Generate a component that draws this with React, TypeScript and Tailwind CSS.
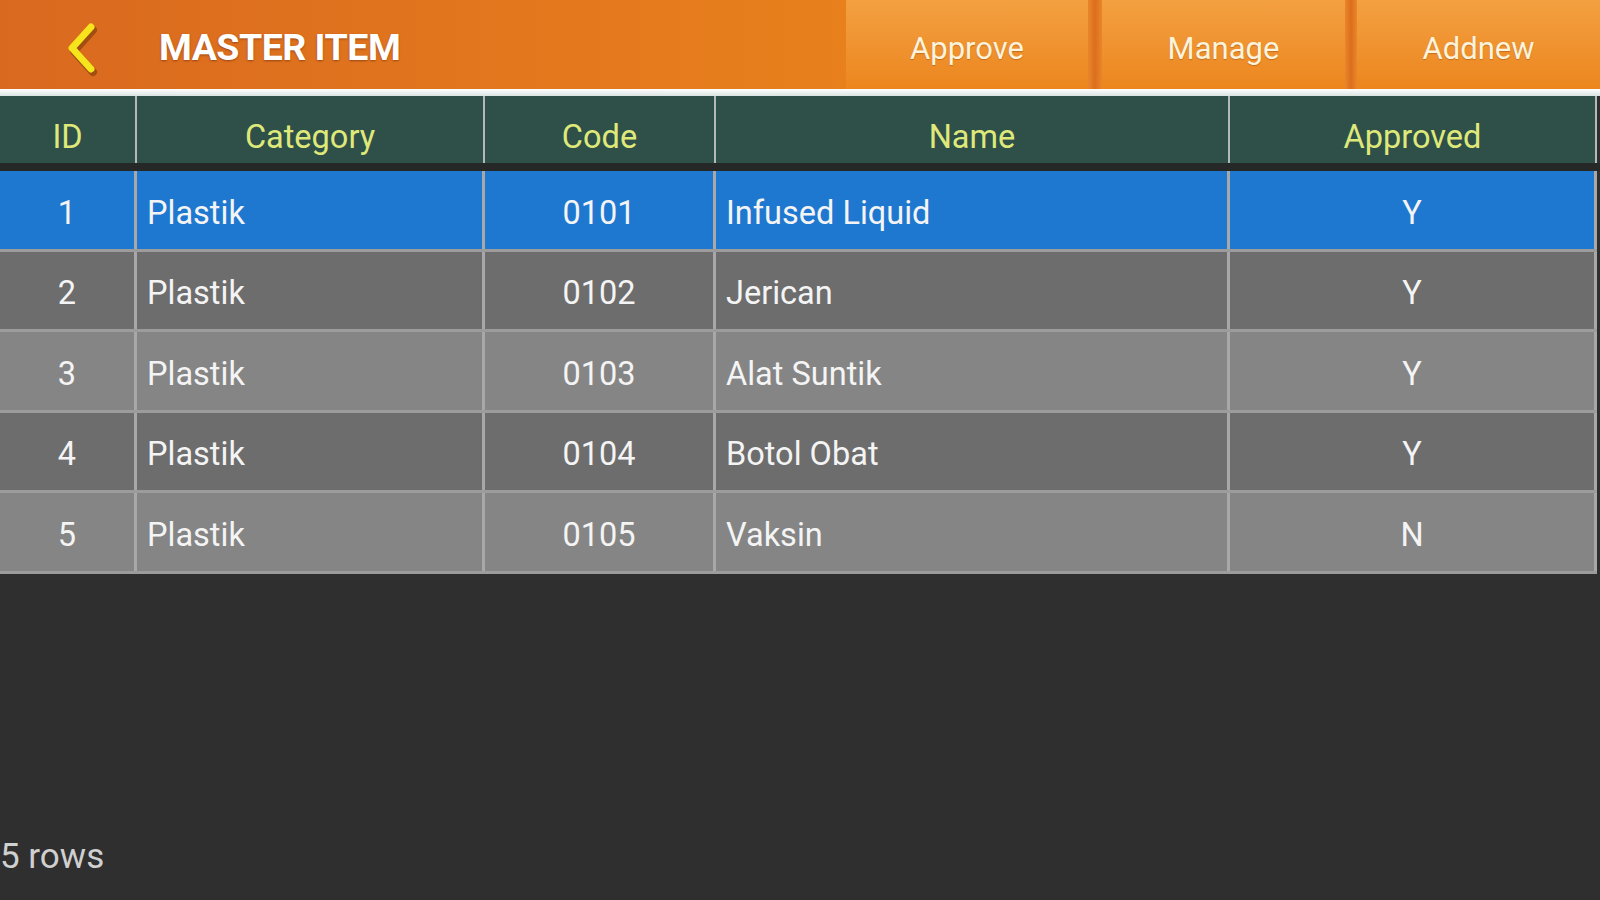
import React from 'react';

type Item = { id: number; category: string; code: string; name: string; approved: string };

const items: Item[] = [
  { id: 1, category: 'Plastik', code: '0101', name: 'Infused Liquid', approved: 'Y' },
  { id: 2, category: 'Plastik', code: '0102', name: 'Jerican', approved: 'Y' },
  { id: 3, category: 'Plastik', code: '0103', name: 'Alat Suntik', approved: 'Y' },
  { id: 4, category: 'Plastik', code: '0104', name: 'Botol Obat', approved: 'Y' },
  { id: 5, category: 'Plastik', code: '0105', name: 'Vaksin', approved: 'N' },
];

const cols = 'grid grid-cols-[137px_348px_231px_514px_367px] w-[1597px]';

function HeaderButton({ label, width }: { label: string; width: string }) {
  return (
    <button
      type="button"
      className={`${width} h-full flex items-center justify-center pt-[9px] bg-gradient-to-b from-[#f3a040] to-[#ec861c] text-[31px] text-[#fbf3dc] [text-shadow:0_1px_1px_rgba(120,50,0,0.35)]`}
    >
      {label}
    </button>
  );
}

function Separator({ width }: { width: string }) {
  return <div className={`${width} h-full bg-gradient-to-r from-[#e9862a] via-[#dc6e1c] to-[#e9862a]`} />;
}

export default function App() {
  return (
    <div className="w-[1600px] h-[900px] flex flex-col bg-[#2f2f2f] font-['Roboto',sans-serif] overflow-hidden">
      {/* top bar */}
      <div className="h-[89px] flex shrink-0">
        <div className="flex-1 flex items-center bg-gradient-to-r from-[#d9691f] to-[#e8801c]">
          <svg width="44" height="60" viewBox="0 0 44 60" className="ml-[58px] mt-[4px]">
            <polyline points="33,10 14,31 33,52" fill="none" stroke="#7a3a08" strokeWidth="8" strokeLinecap="round" strokeLinejoin="round" transform="translate(2,3)" opacity="0.6" />
            <polyline points="33,10 14,31 33,52" fill="none" stroke="#f6e41c" strokeWidth="7" strokeLinecap="round" strokeLinejoin="round" />
          </svg>
          <span className="ml-[57px] pt-[6px] text-[37.5px] font-bold text-white tracking-[-0.5px] [text-shadow:0_1px_2px_rgba(90,30,0,0.5)]">
            MASTER ITEM
          </span>
        </div>
        <HeaderButton label="Approve" width="w-[242px]" />
        <Separator width="w-[14px]" />
        <HeaderButton label="Manage" width="w-[243px]" />
        <Separator width="w-[12px]" />
        <HeaderButton label="Addnew" width="w-[243px]" />
      </div>
      <div className="h-[7px] shrink-0 bg-gradient-to-b from-white to-[#d9e4e2]" />

      {/* table header */}
      <div className={`${cols} h-[67px] shrink-0 bg-[#2f5049] text-[32.5px] text-[#dfe97a]`}>
        <div className="flex items-center justify-center pt-[15px] border-r-2 border-[#b4b9b8]">ID</div>
        <div className="flex items-center justify-center pt-[15px] border-r-2 border-[#b4b9b8]">Category</div>
        <div className="flex items-center justify-center pt-[15px] border-r-2 border-[#b4b9b8]">Code</div>
        <div className="flex items-center justify-center pt-[15px] border-r-2 border-[#b4b9b8]">Name</div>
        <div className="flex items-center justify-center pt-[15px] border-r-2 border-[#b4b9b8]">Approved</div>
      </div>
      <div className="h-[8px] shrink-0 bg-[#262827]" />

      {/* rows */}
      <div className="shrink-0">
        {items.map((it, i) => {
          const bg = i === 0 ? 'bg-[#1f78d0]' : i % 2 === 1 ? 'bg-[#6d6d6d]' : 'bg-[#858585]';
          return (
            <div key={it.id} className={`${cols} ${bg} h-[80.5px] border-b-[3px] border-[#9c9c9c] text-[32.5px] text-[#f4f4f4]`}>
              <div className="flex items-center justify-center pt-[7px] border-r-[3px] border-[#a8a8a8]">{it.id}</div>
              <div className="flex items-center pl-[10px] pt-[7px] border-r-[3px] border-[#a8a8a8]">{it.category}</div>
              <div className="flex items-center justify-center pt-[7px] border-r-[3px] border-[#a8a8a8]">{it.code}</div>
              <div className="flex items-center pl-[10px] pt-[7px] border-r-[3px] border-[#a8a8a8]">{it.name}</div>
              <div className="flex items-center justify-center pt-[7px] border-r-[3px] border-[#a8a8a8]">{it.approved}</div>
            </div>
          );
        })}
      </div>

      {/* footer */}
      <div className="flex-1 flex items-end pb-[17px]">
        <span className="text-[35px] text-[#d0d0d0]">{items.length} rows</span>
      </div>
    </div>
  );
}
